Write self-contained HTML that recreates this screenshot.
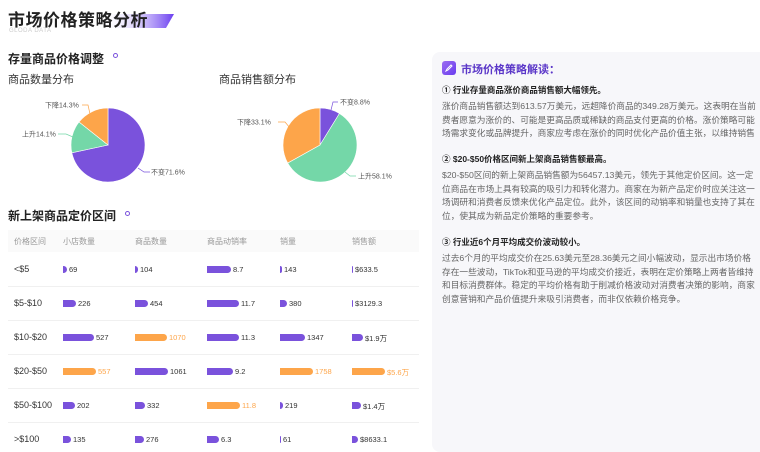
<!DOCTYPE html>
<html><head><meta charset="utf-8"><style>
*{margin:0;padding:0;box-sizing:border-box}
body{width:760px;height:440px;overflow:hidden;background:#fff;font-family:"Liberation Sans","Noto Sans CJK SC",sans-serif;position:relative;color:#222}
.a{position:absolute;white-space:nowrap}
.bar{position:absolute;height:7px;border-radius:0 4px 4px 0}
.p{background:#7a52dc}.o{background:#fda54a}
.n{position:absolute;font-size:7.5px;color:#333}
.no{color:#fda54a}
.panel{position:absolute;left:432px;top:52px;width:340px;height:400px;background:#f7f7fa;border-radius:8px}
.panel h4{font-size:8.5px;font-weight:bold;color:#222;position:absolute;left:10px}
.panel p{font-size:8.7px;color:#666;line-height:13.5px;position:absolute;left:10px;width:340px;white-space:nowrap}
</style></head><body>
<svg class="a" style="left:100px;top:12px" width="80" height="16"><defs><linearGradient id="g" x1="0" x2="1"><stop offset="0" stop-color="#fff" stop-opacity="0"/><stop offset="1" stop-color="#6a3df0"/></linearGradient></defs><polygon points="0,2 74,2 66,16 0,16" fill="url(#g)"/></svg>
<div class="a" style="left:8px;top:6px;font-size:17px;font-weight:bold;color:#222;letter-spacing:.5px">市场价格策略分析</div>
<div class="a" style="left:9px;top:28px;font-size:6px;color:#ccc;letter-spacing:.5px">GLODA DATA</div>
<div class="a" style="left:8px;top:50px;font-size:12px;font-weight:bold">存量商品价格调整</div>
<div class="a" style="left:113px;top:53px;width:5px;height:5px;border:1.5px solid #7a52dc;border-radius:50%"></div>
<div class="a" style="left:8px;top:71px;font-size:11px;color:#333">商品数量分布</div>
<div class="a" style="left:219px;top:71px;font-size:11px;color:#333">商品销售额分布</div>
<svg class="a" style="left:0;top:90px" width="430" height="110" viewBox="0 90 430 110">
<path d="M108,145 L108,108 A37,37 0 1 1 71.84,152.82 Z" fill="#7a52dc" stroke="#fff" stroke-width=".6"/>
<path d="M108,145 L71.84,152.82 A37,37 0 0 1 79.04,121.97 Z" fill="#74d7a8" stroke="#fff" stroke-width=".6"/>
<path d="M108,145 L79.04,121.97 A37,37 0 0 1 108,108 Z" fill="#fda54a" stroke="#fff" stroke-width=".6"/>
<path d="M320,145 L320,108 A37,37 0 0 1 339.43,113.51 Z" fill="#7a52dc" stroke="#fff" stroke-width=".6"/>
<path d="M320,145 L339.43,113.51 A37,37 0 1 1 287.69,163.03 Z" fill="#74d7a8" stroke="#fff" stroke-width=".6"/>
<path d="M320,145 L287.69,163.03 A37,37 0 0 1 320,108 Z" fill="#fda54a" stroke="#fff" stroke-width=".6"/>
<g fill="none" stroke-width=".7">
<polyline points="138,168 144,172 150,172" stroke="#7a52dc"/>
<polyline points="73,137 66,134 58,134" stroke="#74d7a8"/>
<polyline points="90,114 88,105 82,105" stroke="#fda54a"/>
<polyline points="331,110 333,102 338,102" stroke="#7a52dc"/>
<polyline points="345,172 350,176 356,176" stroke="#74d7a8"/>
<polyline points="290,128 285,122 278,122" stroke="#fda54a"/>
</g>
<g font-size="7" fill="#555">
<text x="151" y="174.5">不变71.6%</text>
<text x="22" y="136.5">上升14.1%</text>
<text x="45" y="107.5">下降14.3%</text>
<text x="340" y="104.5">不变8.8%</text>
<text x="358" y="178.5">上升58.1%</text>
<text x="237" y="124.5">下降33.1%</text>
</g></svg>
<div class="a" style="left:8px;top:207px;font-size:12px;font-weight:bold">新上架商品定价区间</div>
<div class="a" style="left:125px;top:211px;width:5px;height:5px;border:1.5px solid #7a52dc;border-radius:50%"></div>
<div class="a" style="left:8px;top:230px;width:411px;height:22px;background:#fafafa"></div>
<div class="a" style="left:14px;top:236px;font-size:8px;color:#999">价格区间</div>
<div class="a" style="left:63px;top:236px;font-size:8px;color:#999">小店数量</div>
<div class="a" style="left:135px;top:236px;font-size:8px;color:#999">商品数量</div>
<div class="a" style="left:207px;top:236px;font-size:8px;color:#999">商品动销率</div>
<div class="a" style="left:280px;top:236px;font-size:8px;color:#999">销量</div>
<div class="a" style="left:352px;top:236px;font-size:8px;color:#999">销售额</div>
<div class="a" style="left:8px;top:286px;width:411px;height:1px;background:#f0f0f0"></div>
<div class="a" style="left:8px;top:320px;width:411px;height:1px;background:#f0f0f0"></div>
<div class="a" style="left:8px;top:354px;width:411px;height:1px;background:#f0f0f0"></div>
<div class="a" style="left:8px;top:388px;width:411px;height:1px;background:#f0f0f0"></div>
<div class="a" style="left:8px;top:422px;width:411px;height:1px;background:#f0f0f0"></div>
<div class="a" style="left:14px;top:264px;font-size:9px;color:#333">&lt;$5</div>
<div class="a" style="left:14px;top:298px;font-size:9px;color:#333">$5-$10</div>
<div class="a" style="left:14px;top:332px;font-size:9px;color:#333">$10-$20</div>
<div class="a" style="left:14px;top:366px;font-size:9px;color:#333">$20-$50</div>
<div class="a" style="left:14px;top:400px;font-size:9px;color:#333">$50-$100</div>
<div class="a" style="left:14px;top:434px;font-size:9px;color:#333">&gt;$100</div>
<div class="bar p" style="left:63px;top:266px;width:4px"></div><div class="n" style="left:69px;top:265px">69</div>
<div class="bar p" style="left:135px;top:266px;width:3px"></div><div class="n" style="left:140px;top:265px">104</div>
<div class="bar p" style="left:207px;top:266px;width:24px"></div><div class="n" style="left:233px;top:265px">8.7</div>
<div class="bar p" style="left:280px;top:266px;width:2px"></div><div class="n" style="left:284px;top:265px">143</div>
<div class="bar p" style="left:352px;top:266px;width:1px"></div><div class="n" style="left:355px;top:265px">$633.5</div>
<div class="bar p" style="left:63px;top:300px;width:13px"></div><div class="n" style="left:78px;top:299px">226</div>
<div class="bar p" style="left:135px;top:300px;width:13px"></div><div class="n" style="left:150px;top:299px">454</div>
<div class="bar p" style="left:207px;top:300px;width:32px"></div><div class="n" style="left:241px;top:299px">11.7</div>
<div class="bar p" style="left:280px;top:300px;width:7px"></div><div class="n" style="left:289px;top:299px">380</div>
<div class="bar p" style="left:352px;top:300px;width:1px"></div><div class="n" style="left:355px;top:299px">$3129.3</div>
<div class="bar p" style="left:63px;top:334px;width:31px"></div><div class="n" style="left:96px;top:333px">527</div>
<div class="bar o" style="left:135px;top:334px;width:32px"></div><div class="n no" style="left:169px;top:333px">1070</div>
<div class="bar p" style="left:207px;top:334px;width:32px"></div><div class="n" style="left:241px;top:333px">11.3</div>
<div class="bar p" style="left:280px;top:334px;width:25px"></div><div class="n" style="left:307px;top:333px">1347</div>
<div class="bar p" style="left:352px;top:334px;width:11px"></div><div class="n" style="left:365px;top:333px">$1.9万</div>
<div class="bar o" style="left:63px;top:368px;width:33px"></div><div class="n no" style="left:98px;top:367px">557</div>
<div class="bar p" style="left:135px;top:368px;width:33px"></div><div class="n" style="left:170px;top:367px">1061</div>
<div class="bar p" style="left:207px;top:368px;width:26px"></div><div class="n" style="left:235px;top:367px">9.2</div>
<div class="bar o" style="left:280px;top:368px;width:33px"></div><div class="n no" style="left:315px;top:367px">1758</div>
<div class="bar o" style="left:352px;top:368px;width:33px"></div><div class="n no" style="left:387px;top:367px">$5.6万</div>
<div class="bar p" style="left:63px;top:402px;width:12px"></div><div class="n" style="left:77px;top:401px">202</div>
<div class="bar p" style="left:135px;top:402px;width:10px"></div><div class="n" style="left:147px;top:401px">332</div>
<div class="bar o" style="left:207px;top:402px;width:33px"></div><div class="n no" style="left:242px;top:401px">11.8</div>
<div class="bar p" style="left:280px;top:402px;width:3px"></div><div class="n" style="left:285px;top:401px">219</div>
<div class="bar p" style="left:352px;top:402px;width:9px"></div><div class="n" style="left:363px;top:401px">$1.4万</div>
<div class="bar p" style="left:63px;top:436px;width:8px"></div><div class="n" style="left:73px;top:435px">135</div>
<div class="bar p" style="left:135px;top:436px;width:9px"></div><div class="n" style="left:146px;top:435px">276</div>
<div class="bar p" style="left:207px;top:436px;width:12px"></div><div class="n" style="left:221px;top:435px">6.3</div>
<div class="bar p" style="left:280px;top:436px;width:1px"></div><div class="n" style="left:283px;top:435px">61</div>
<div class="bar p" style="left:352px;top:436px;width:6px"></div><div class="n" style="left:360px;top:435px">$8633.1</div>

<div class="panel">
<div class="a" style="left:10px;top:9px;width:14px;height:14px;border-radius:3px;background:linear-gradient(135deg,#9b6cf0,#6a3df0)"></div>
<svg class="a" style="left:13px;top:12px" width="8" height="8"><path d="M1,7 L2,5 L6,1 L7,2 L3,6 Z" fill="none" stroke="#fff" stroke-width="1"/></svg>
<div class="a" style="left:29px;top:9px;font-size:11px;font-weight:bold;color:#5a36c8">市场价格策略解读：</div>
<h4 style="top:32px">① 行业存量商品涨价商品销售额大幅领先。</h4>
<p style="top:48px">涨价商品销售额达到613.57万美元，远超降价商品的349.28万美元。这表明在当前<br>费者愿意为涨价的、可能是更高品质或稀缺的商品支付更高的价格。涨价策略可能<br>场需求变化或品牌提升，商家应考虑在涨价的同时优化产品价值主张，以维持销售</p>
<h4 style="top:101px">② $20-$50价格区间新上架商品销售额最高。</h4>
<p style="top:117px">$20-$50区间的新上架商品销售额为56457.13美元，领先于其他定价区间。这一定<br>位商品在市场上具有较高的吸引力和转化潜力。商家在为新产品定价时应关注这一<br>场调研和消费者反馈来优化产品定位。此外，该区间的动销率和销量也支持了其在<br>位，使其成为新品定价策略的重要参考。</p>
<h4 style="top:184px">③ 行业近6个月平均成交价波动较小。</h4>
<p style="top:200px">过去6个月的平均成交价在25.63美元至28.36美元之间小幅波动，显示出市场价格<br>存在一些波动，TikTok和亚马逊的平均成交价接近，表明在定价策略上两者皆维持<br>和目标消费群体。稳定的平均价格有助于削减价格波动对消费者决策的影响，商家<br>创意营销和产品价值提升来吸引消费者，而非仅依赖价格竞争。</p>
</div>
</body></html>
